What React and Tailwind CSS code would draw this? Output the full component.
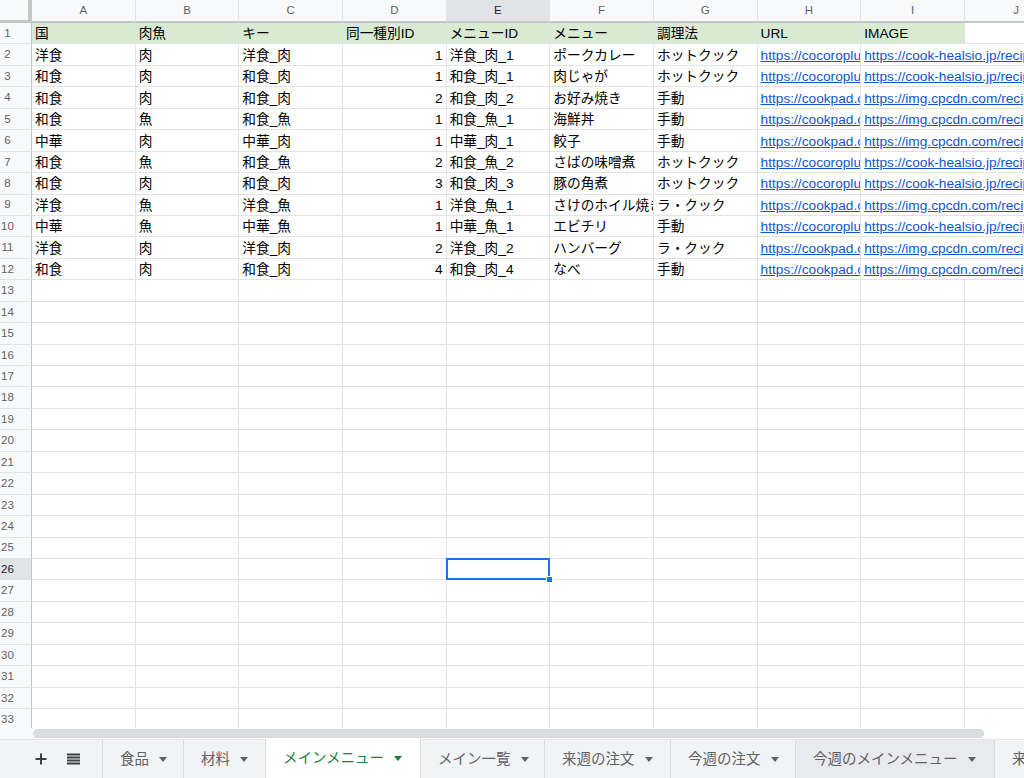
import React from "react";

const COLS = ["A", "B", "C", "D", "E", "F", "G", "H", "I", "J"];
const HEAD = ["国", "肉魚", "キー", "同一種別ID", "メニューID", "メニュー", "調理法", "URL", "IMAGE"];

const CO = "https://cocoroplus.jp.sharp/kitchen/recipe/";
const CH = "https://cook-healsio.jp/recipe/detail";
const CP = "https://cookpad.com/recipe/";
const IM = "https://img.cpcdn.com/recipes/";

const DATA = [
  ["洋食", "肉", "洋食_肉", "1", "洋食_肉_1", "ポークカレー", "ホットクック", CO, CH],
  ["和食", "肉", "和食_肉", "1", "和食_肉_1", "肉じゃが", "ホットクック", CO, CH],
  ["和食", "肉", "和食_肉", "2", "和食_肉_2", "お好み焼き", "手動", CP, IM],
  ["和食", "魚", "和食_魚", "1", "和食_魚_1", "海鮮丼", "手動", CP, IM],
  ["中華", "肉", "中華_肉", "1", "中華_肉_1", "餃子", "手動", CP, IM],
  ["和食", "魚", "和食_魚", "2", "和食_魚_2", "さばの味噌煮", "ホットクック", CO, CH],
  ["和食", "肉", "和食_肉", "3", "和食_肉_3", "豚の角煮", "ホットクック", CO, CH],
  ["洋食", "魚", "洋食_魚", "1", "洋食_魚_1", "さけのホイル焼き", "ラ・クック", CP, IM],
  ["中華", "魚", "中華_魚", "1", "中華_魚_1", "エビチリ", "手動", CO, CH],
  ["洋食", "肉", "洋食_肉", "2", "洋食_肉_2", "ハンバーグ", "ラ・クック", CP, IM],
  ["和食", "肉", "和食_肉", "4", "和食_肉_4", "なべ", "手動", CP, IM],
];

const GRID = "grid grid-cols-[32px_repeat(10,103.67px)]";

function Arrow({ active }) {
  return (
    <svg width="8" height="5" viewBox="0 0 8 5" className="shrink-0">
      <path d="M0 0 L8 0 L4 5 Z" fill={active ? "#188038" : "#5f6368"} />
    </svg>
  );
}

const TABS = [
  { label: "食品", w: 81 },
  { label: "材料", w: 82 },
  { label: "メインメニュー", w: 155, active: true },
  { label: "メイン一覧", w: 124 },
  { label: "来週の注文", w: 126 },
  { label: "今週の注文", w: 125 },
  { label: "今週のメインメニュー", w: 199, hover: true },
  { label: "来週のメインメニュー", w: 199 },
];

function Row({ n }) {
  const selRow = n === 26;
  const data = n === 1 ? HEAD : n >= 2 && n <= 12 ? DATA[n - 2] : null;
  return (
    <div className={`${GRID} h-[21.44px] shrink-0`}>
      <div
        className={`flex items-center pt-[1px] border-b border-r border-b-[#e2e3e3] border-r-[#c4c7c5] text-[11.5px] ${
          selRow ? "bg-[#e1e3e6] text-[#202124]" : "bg-[#f8f9fa] text-[#5f6368]"
        }`}
      >
        <span className="w-[15px] text-center">{n}</span>
      </div>
      {COLS.map((c, ci) => {
        const v = data ? data[ci] : undefined;
        const isHead = n === 1;
        const isData = n >= 2 && n <= 12;
        const green = isHead && ci < 9;
        const isLink = isData && ci >= 7;
        const overflowVisible = isData && ci === 8;
        const right = isData && ci === 3;
        const sel = selRow && ci === 4;
        return (
          <div
            key={c}
            className={`relative flex items-center pt-[2px] border-b border-[#e2e3e3] whitespace-nowrap ${
              overflowVisible ? "z-10 overflow-visible" : sel ? "z-20 overflow-visible border-r" : "overflow-hidden border-r"
            } ${green ? "bg-[#d9ead3]" : "bg-white"} ${right ? "justify-end pr-[3px]" : "pl-[3px]"}`}
          >
            {v !== undefined && (
              <span
                className={
                  isLink
                    ? "text-[#1155cc] underline decoration-[#1155cc] underline-offset-[1px]"
                    : "text-[#000000]"
                }
              >
                {v}
              </span>
            )}
            {sel && (
              <>
                <div className="absolute left-[-1px] top-[-1px] right-[-1px] bottom-[-1px] border-2 border-[#1a73e8]" />
                <div className="absolute right-[-4px] bottom-[-4px] w-[7px] h-[7px] bg-[#1a73e8] border border-white" />
              </>
            )}
          </div>
        );
      })}
    </div>
  );
}

export default function App() {
  const rows = [];
  for (let i = 1; i <= 33; i++) rows.push(<Row key={i} n={i} />);
  return (
    <div className="w-[1024px] h-[778px] overflow-hidden bg-white flex flex-col font-['Liberation_Sans','Noto_Sans_CJK_JP',sans-serif] text-[13.7px] leading-none">
      {/* grid */}
      <div className="h-[728px] overflow-hidden flex flex-col shrink-0">
        <div className={`${GRID} h-[23px] shrink-0`}>
          <div className="bg-[#f8f9fa] border-r-[4px] border-b-[3px] border-[#c4c7c5]" />
          {COLS.map((c, ci) => (
            <div
              key={c}
              className={`flex items-center justify-center pt-[1px] border-r border-r-[#e2e3e3] border-b-2 border-b-[#c4c7c5] text-[11.5px] ${
                ci === 4 ? "bg-[#e1e3e6] text-[#202124]" : "bg-[#f8f9fa] text-[#5f6368]"
              }`}
            >
              {c}
            </div>
          ))}
        </div>
        {rows}
      </div>
      {/* scrollbar */}
      <div className="h-[11px] flex shrink-0 bg-white">
        <div className="w-[33px] bg-[#f8f9fa] shrink-0" />
        <div className="w-[951px] h-[9px] mt-[0.5px] rounded-full bg-[#dadce0]" />
      </div>
      {/* tab bar */}
      <div className="flex-1 flex items-stretch bg-[#f1f3f4] border-t border-[#e3e3e3]">
        <div className="w-[103px] shrink-0 flex items-center border-r border-[#dadce0]">
          <svg width="12" height="12" viewBox="0 0 12 12" className="ml-[35px]">
            <path d="M6 0.5 V11.5 M0.5 6 H11.5" stroke="#3c4043" strokeWidth="2" />
          </svg>
          <svg width="13" height="12" viewBox="0 0 13 12" className="ml-[20px]">
            <path d="M0 1.5 H13 M0 4.5 H13 M0 7.5 H13 M0 10.5 H13" stroke="#3c4043" strokeWidth="1.8" />
          </svg>
        </div>
        {TABS.map((t) => (
          <div
            key={t.label}
            style={{ width: t.w }}
            className={`shrink-0 flex items-center gap-[10px] pl-[17px] border-r border-[#dadce0] text-[14.5px] ${
              t.active
                ? "bg-white text-[#188038] mt-[-1px]"
                : t.hover
                ? "bg-[#e8eaed] text-[#5f6368]"
                : "text-[#5f6368]"
            }`}
          >
            <span className="whitespace-nowrap">{t.label}</span>
            <Arrow active={t.active} />
          </div>
        ))}
      </div>
    </div>
  );
}
